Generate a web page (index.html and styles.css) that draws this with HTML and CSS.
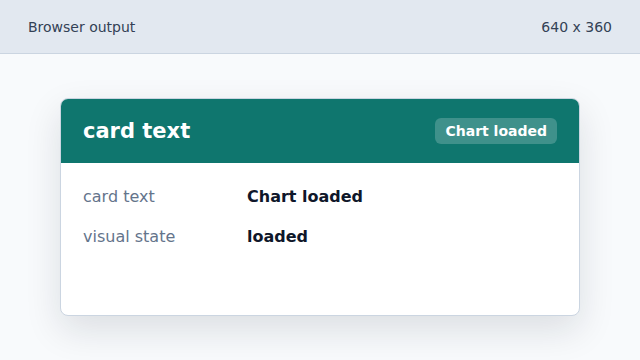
FILE: index.html
```html
<!DOCTYPE html>
<html lang="en">
<head>
    <meta charset="UTF-8">
    <title>Browser output</title>
    <link rel="stylesheet" href="styles.css">
</head>
<body>
<div class="topbar">
    <span>Browser output</span>
    <span>640 x 360</span>
</div>
<div class="stage">
    <div class="card">
        <div class="card-head">
            <h1 class="card-title">card text</h1>
            <span class="badge">Chart loaded</span>
        </div>
        <div class="card-body">
            <div class="row">
                <span class="label">card text</span>
                <span class="value">Chart loaded</span>
            </div>
            <div class="row">
                <span class="label">visual state</span>
                <span class="value">loaded</span>
            </div>
        </div>
    </div>
</div>
</body>
</html>
```

FILE: styles.css
```css
html, body {
    height: 100%;
}
body {
    margin: 0;
    background: #f8fafc;
    font-family: 'DejaVu Sans', sans-serif;
}
.topbar {
    height: 53px;
    display: flex;
    justify-content: space-between;
    align-items: center;
    padding: 0 28px;
    background: #e2e8f0;
    border-bottom: 1px solid #cbd5e1;
    font-size: 14px;
    color: #334155;
}
.stage {
    padding-top: 44px;
    display: flex;
    justify-content: center;
}
.card {
    width: 518px;
    height: 216px;
    background: #ffffff;
    border: 1px solid #cbd5e1;
    border-radius: 8px;
    overflow: hidden;
    box-shadow: 0 14px 36px rgba(15, 23, 42, 0.12);
}
.card-head {
    height: 64px;
    display: flex;
    justify-content: space-between;
    align-items: center;
    padding: 0 22px;
    background: #0f766e;
    color: #ffffff;
}
.card-title {
    margin: 0;
    font-size: 21px;
    font-weight: bold;
}
.badge {
    padding: 5px 10px;
    border-radius: 6px;
    background: rgba(255, 255, 255, 0.2);
    font-size: 14px;
    font-weight: bold;
}
.card-body {
    padding: 22px;
    display: flex;
    flex-direction: column;
    gap: 16px;
}
.row {
    display: grid;
    grid-template-columns: 164px 1fr;
    line-height: 24px;
    font-size: 16px;
}
.label {
    color: #64748b;
}
.value {
    color: #0f172a;
    font-weight: bold;
}
```
